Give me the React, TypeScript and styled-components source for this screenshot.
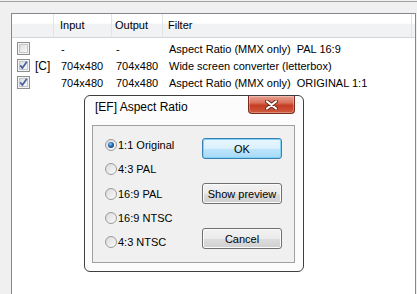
import React from 'react'
import styled, { createGlobalStyle } from 'styled-components'

type Filter = {
  enabled: boolean
  tag: string
  input: string
  output: string
  name: string
}

const filters: Filter[] = [
  { enabled: false, tag: '', input: '-', output: '-', name: 'Aspect Ratio (MMX only)  PAL 16:9' },
  { enabled: true, tag: '[C]', input: '704x480', output: '704x480', name: 'Wide screen converter (letterbox)' },
  { enabled: true, tag: '', input: '704x480', output: '704x480', name: 'Aspect Ratio (MMX only)  ORIGINAL 1:1' },
]

const ratios = ['1:1 Original', '4:3 PAL', '16:9 PAL', '16:9 NTSC', '4:3 NTSC']

const CheckBox = ({ checked }: { checked: boolean }) => (
  <CheckBoxIcon width="13" height="13" viewBox="0 0 13 13">
    <defs>
      <linearGradient id="cbfill" x1="0" y1="0" x2="1" y2="1">
        <stop offset="0" stopColor="#dcdcdc" />
        <stop offset="1" stopColor="#fbfbfb" />
      </linearGradient>
    </defs>
    <rect x="0.5" y="0.5" width="12" height="12" fill="#f4f4f4" stroke="#8e8f8f" />
    <rect x="2.5" y="2.5" width="8" height="8" fill="url(#cbfill)" stroke="#c4c6c9" />
    {checked && (
      <path d="M3.2 6.4 L5.4 9 L9.8 2.8" fill="none" stroke="#4663a0" strokeWidth="1.7" />
    )}
  </CheckBoxIcon>
)

const Radio = ({ checked }: { checked: boolean }) => (
  <RadioIcon width="12" height="12" viewBox="0 0 12 12">
    <defs>
      <linearGradient id="rdfill" x1="0" y1="0" x2="1" y2="1">
        <stop offset="0" stopColor="#d8d8d8" />
        <stop offset="1" stopColor="#fdfdfd" />
      </linearGradient>
      <radialGradient id="rddot" cx="0.4" cy="0.35" r="0.7">
        <stop offset="0" stopColor="#8fd0f7" />
        <stop offset="0.5" stopColor="#2a6fb5" />
        <stop offset="1" stopColor="#163f7a" />
      </radialGradient>
    </defs>
    <circle cx="6" cy="6" r="5.5" fill="url(#rdfill)" stroke="#999a9a" />
    {checked && <circle cx="6" cy="6" r="3" fill="url(#rddot)" />}
  </RadioIcon>
)

const App = () => {
  return (
    <Page>
      <GlobalStyle />
      <TopRule />
      <ListBox>
        <Header>
          <HeadCell $w={42} $pad={0} />
          <HeadCell $w={58} $pad={6}>Input</HeadCell>
          <HeadCell $w={51} $pad={3}>Output</HeadCell>
          <HeadCell $w={249} $pad={5}>Filter</HeadCell>
        </Header>
        <Rows>
          {filters.map((f, i) => (
            <Row key={i}>
              <Cell $w={42} $pad={5}>
                <CheckBox checked={f.enabled} />
                <Tag>{f.tag}</Tag>
              </Cell>
              <Cell $w={58} $pad={7}>{f.input}</Cell>
              <Cell $w={51} $pad={4}>{f.output}</Cell>
              <Cell $w={249} $pad={6}>{f.name}</Cell>
            </Row>
          ))}
        </Rows>
      </ListBox>

      <Dialog>
        <TitleBar>
          <Title>[EF] Aspect Ratio</Title>
          <CloseButton>
            <svg width="13" height="10" viewBox="0 0 13 10">
              <path d="M2 1.5 L11 8.5 M11 1.5 L2 8.5" stroke="#6b2a20" strokeWidth="4" strokeLinecap="round" />
              <path d="M2 1.5 L11 8.5 M11 1.5 L2 8.5" stroke="#ffffff" strokeWidth="2.2" strokeLinecap="round" />
            </svg>
          </CloseButton>
        </TitleBar>
        <Client>
          <RadioList>
            {ratios.map((r, i) => (
              <RadioRow key={r}>
                <Radio checked={i === 0} />
                <span>{r}</span>
              </RadioRow>
            ))}
          </RadioList>
          <Buttons>
            <PushButton $default>OK</PushButton>
            <PushButton>Show preview</PushButton>
            <PushButton>Cancel</PushButton>
          </Buttons>
        </Client>
      </Dialog>
    </Page>
  )
}

const GlobalStyle = createGlobalStyle`
  html, body {
    margin: 0;
    padding: 0;
    background: #f0f0f0;
    overflow: hidden;
  }
  body {
    font-family: "Liberation Sans", Arial, sans-serif;
    font-size: 11px;
    color: #000;
  }
`

const Page = styled.div`
  position: relative;
  width: 417px;
  height: 294px;
  padding-top: 1px;
  box-sizing: border-box;
  overflow: hidden;
`

const TopRule = styled.div`
  height: 1px;
  background: #a0a0a0;
`

const ListBox = styled.div`
  margin: 11px 0 0 11px;
  width: 405px;
  height: 300px;
  box-sizing: border-box;
  border: 1px solid #828790;
  border-bottom: none;
  background: #fff;
`

const Header = styled.div`
  display: flex;
  height: 23px;
  border-bottom: 1px solid #d5d5d5;
  background: linear-gradient(#ffffff 0%, #ffffff 40%, #f1f2f4 45%, #f1f2f4 100%);
`

const HeadCell = styled.div<{ $w: number; $pad: number }>`
  width: ${(p) => p.$w}px;
  padding-left: ${(p) => p.$pad}px;
  box-sizing: border-box;
  display: flex;
  align-items: center;
  border-right: 1px solid #e3e4e6;
  line-height: 13px;
`

const Rows = styled.div`
  padding-top: 2px;
`

const Row = styled.div`
  display: flex;
  height: 17px;
  align-items: center;
`

const Cell = styled.div<{ $w: number; $pad: number }>`
  width: ${(p) => p.$w}px;
  padding-left: ${(p) => p.$pad}px;
  box-sizing: border-box;
  display: flex;
  align-items: center;
  white-space: pre;
  flex-shrink: 0;
`

const CheckBoxIcon = styled.svg`
  display: block;
  flex-shrink: 0;
`

const Tag = styled.span`
  margin-left: 5px;
  font-size: 12px;
`

const Dialog = styled.div`
  position: absolute;
  left: 84px;
  top: 95px;
  width: 220px;
  height: 177px;
  box-sizing: border-box;
  border: 1px solid #3e3e3e;
  border-radius: 6px;
  background: #fcfcfc;
  box-shadow: inset 0 0 0 1px #ffffff;
`

const TitleBar = styled.div`
  display: flex;
  justify-content: space-between;
  align-items: flex-start;
  height: 29px;
  padding: 0 8px 0 10px;
`

const Title = styled.div`
  margin-top: 4px;
  font-size: 12px;
  line-height: 15px;
`

const CloseButton = styled.div`
  width: 47px;
  height: 18px;
  box-sizing: border-box;
  display: flex;
  align-items: center;
  justify-content: center;
  border: 1px solid #7a2a1e;
  border-top: none;
  border-radius: 0 0 4px 4px;
  background: linear-gradient(#e8a090 0%, #d8705a 40%, #c53d24 55%, #d05a3f 100%);
  box-shadow: inset 0 0 0 1px rgba(255, 255, 255, 0.3);
`

const Client = styled.div`
  display: flex;
  justify-content: space-between;
  margin: 0 8px 0 7px;
  height: 138px;
  box-sizing: border-box;
  border: 1px solid #a0a0a0;
  background: #f0f0f0;
  padding: 7px 12px 0 12px;
`

const RadioList = styled.div`
  display: flex;
  flex-direction: column;
`

const RadioRow = styled.div`
  display: flex;
  align-items: center;
  gap: 1px;
  height: 24.3px;
`

const RadioIcon = styled.svg`
  display: block;
  flex-shrink: 0;
`

const Buttons = styled.div`
  display: flex;
  flex-direction: column;
  gap: 24px;
  margin-top: 5px;
`

const PushButton = styled.div<{ $default?: boolean }>`
  width: 80px;
  height: 21px;
  box-sizing: border-box;
  display: flex;
  align-items: center;
  justify-content: center;
  border: 1px solid ${(p) => (p.$default ? '#3c7fb1' : '#707070')};
  border-radius: 3px;
  background: ${(p) =>
    p.$default
      ? 'linear-gradient(#eaf6fd 0%, #d9f0fc 50%, #bee6fd 51%, #a7d9f5 100%)'
      : 'linear-gradient(#f2f2f2 0%, #ebebeb 50%, #dddddd 51%, #cfcfcf 100%)'};
  box-shadow: inset 0 0 0 1px ${(p) => (p.$default ? '#7fd4f5' : '#fbfbfb')};
`

export default App
